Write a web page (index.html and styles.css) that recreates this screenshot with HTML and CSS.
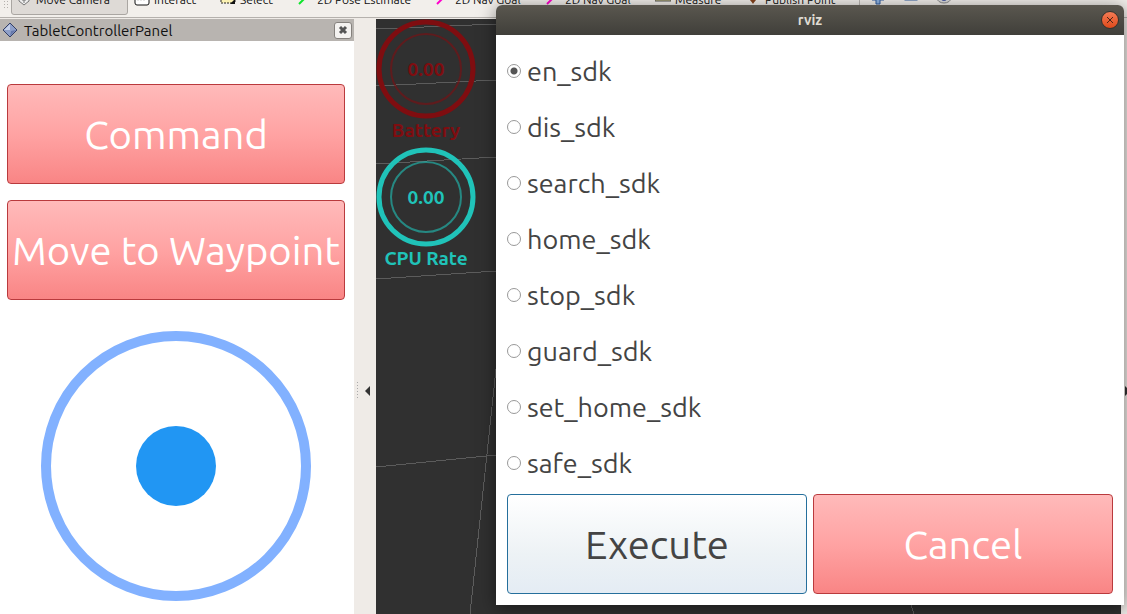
FILE: index.html
```
<!DOCTYPE html>
<html lang="en">
<head>
    <meta charset="UTF-8">
    <title>rviz</title>
    <link rel="stylesheet" href="styles.css">
</head>
<body>
<div id="container">
    <div class="toolbar">
        <div class="handle"></div>
        <button class="tool selected">
            <svg class="icon" viewBox="0 0 16 16"><path d="M5 2h6v5h2v3l-5 4-5-4V7h2z" fill="#eee" stroke="#777"/><path d="M6 9h4M8 6v6" stroke="#777"/></svg>
            Move Camera
        </button>
        <button class="tool">
            <svg class="icon" viewBox="0 0 16 16"><rect x="1" y="0" width="14" height="14" rx="2" fill="#fff" stroke="#111"/><path d="M4 8v2M7 8v2M10 8v2" stroke="#ccc"/></svg>
            Interact
        </button>
        <button class="tool">
            <svg class="icon" viewBox="0 0 16 16"><rect x="1" y="2" width="14" height="10" fill="#fbf1b2" stroke="#222" stroke-dasharray="2 1"/><path d="M15 8v5h-5z" fill="#111"/></svg>
            Select
        </button>
        <button class="tool">
            <svg class="icon" viewBox="0 0 16 16"><path d="M2 13L13 2" stroke="#0de52b" stroke-width="2"/></svg>
            2D Pose Estimate
        </button>
        <button class="tool">
            <svg class="icon" viewBox="0 0 16 16"><path d="M2 13L13 2" stroke="#f0c" stroke-width="2"/></svg>
            2D Nav Goal
        </button>
        <button class="tool">
            <svg class="icon" viewBox="0 0 16 16"><path d="M2 13L13 2" stroke="#f0c" stroke-width="2"/></svg>
            2D Nav Goal
        </button>
        <button class="tool">
            <svg class="icon" viewBox="0 0 16 16"><rect x="0" y="4" width="16" height="6" fill="#d6d08c" stroke="#555"/></svg>
            Measure
        </button>
        <button class="tool">
            <svg class="icon" viewBox="0 0 16 16"><path d="M4 6a4 4 0 0 1 8 0c0 3-3 5-4 7-1-2-4-4-4-7z" fill="#85431d"/></svg>
            Publish Point
        </button>
        <div class="extra">
            <button class="tool" aria-label="Add"><svg class="icon" viewBox="0 0 16 16"><path d="M6 1h4v5h4v3h-4v4h-4v-4h-4v-3h4z" fill="#8fb4e3" stroke="#2f5ca0"/></svg></button>
            <button class="tool" aria-label="Remove"><svg class="icon" viewBox="0 0 16 16"><rect x="2" y="6" width="12" height="3" fill="#8fb4e3" stroke="#2f5ca0"/></svg></button>
            <button class="tool" aria-label="View"><svg class="icon" viewBox="0 0 16 16"><ellipse cx="8" cy="7" rx="7" ry="5" fill="#ddd" stroke="#888"/><circle cx="8" cy="7" r="3" fill="#4858a0"/></svg></button>
        </div>
    </div>

    <div class="main">
        <div class="panel">
            <div class="panel-title">
                <svg class="icon" viewBox="0 0 16 16"><path d="M8 1l7 7-7 7-7-7z" fill="#8e9fc8" stroke="#333f66"/><path d="M8 2v6l-6 0z" fill="#c4cfe8"/><path d="M8 14l6-6-5 1z" fill="#6578ab"/></svg>
                <span>TabletControllerPanel</span>
                <button class="panel-close" aria-label="Close panel">
                    <svg viewBox="0 0 10 10"><path d="M2 2l6 6M8 2l-6 6" stroke="#555" stroke-width="3"/></svg>
                </button>
            </div>
            <div class="panel-body">
                <button class="btn red">Command</button>
                <button class="btn red">Move to Waypoint</button>
                <div class="joystick"><div class="stick"></div></div>
            </div>
        </div>

        <div class="splitter">
            <div class="dots"></div>
            <div class="arrow"></div>
        </div>

        <div class="view">
            <svg class="grid" width="745" height="595" viewBox="0 0 745 595">
                <path d="M0 10L120 5M0 67L120 61M0 145L120 138M0 260L120 252M0 448L110 437L120 436M120 350L94 595M535 586L538 595"/>
            </svg>
            <div class="gauge battery">
                <svg viewBox="0 0 100 100">
                    <circle cx="50" cy="50" r="47" stroke-width="5"/>
                    <circle class="inner" cx="50" cy="50" r="35" stroke-width="2"/>
                    <text x="50" y="57">0.00</text>
                </svg>
                <span>Battery</span>
            </div>
            <div class="gauge cpu">
                <svg viewBox="0 0 100 100">
                    <circle cx="50" cy="50" r="47" stroke-width="5"/>
                    <circle class="inner" cx="50" cy="50" r="35" stroke-width="2"/>
                    <text x="50" y="57">0.00</text>
                </svg>
                <span>CPU Rate</span>
            </div>
        </div>

        <div class="edge"><div class="arrow right"></div></div>
    </div>

    <form class="dialog">
        <div class="dialog-title">
            <span>rviz</span>
            <button type="button" class="dialog-close" aria-label="Close">
                <svg viewBox="0 0 16 16"><path d="M5 5l6 6M11 5l-6 6" stroke="#4a2415"/></svg>
            </button>
        </div>
        <div class="dialog-body">
            <label class="option"><input type="radio" name="cmd" checked>en_sdk</label>
            <label class="option"><input type="radio" name="cmd">dis_sdk</label>
            <label class="option"><input type="radio" name="cmd">search_sdk</label>
            <label class="option"><input type="radio" name="cmd">home_sdk</label>
            <label class="option"><input type="radio" name="cmd">stop_sdk</label>
            <label class="option"><input type="radio" name="cmd">guard_sdk</label>
            <label class="option"><input type="radio" name="cmd">set_home_sdk</label>
            <label class="option"><input type="radio" name="cmd">safe_sdk</label>
            <div class="actions">
                <button type="button" class="btn light">Execute</button>
                <button type="button" class="btn red">Cancel</button>
            </div>
        </div>
    </form>
</div>
</body>
</html>
```
FILE: styles.css
```
* {
    margin: 0;
    padding: 0;
    box-sizing: border-box;
}

body {
    font-family: Ubuntu, "Noto Sans", sans-serif;
    color: #111;
    background: #efebe7;
}

button {
    font-family: inherit;
    color: inherit;
    border: none;
    background: none;
}

#container {
    position: relative;
    display: flex;
    flex-direction: column;
    height: 100vh;
    overflow: hidden;
}

/* toolbar, its upper half is scrolled out of the window */
.toolbar {
    display: grid;
    grid-template-columns: 11px 119px 86px 77px 138px 110px 110px 90px 118px 1fr;
    grid-template-rows: 100%;
    align-items: end;
    flex: none;
    height: 18px;
    padding-bottom: 2px;
    overflow: hidden;
    background: #f2efeb;
    border-bottom: 1px solid #b5b1ad;
}

.handle {
    width: 5px;
    height: 8px;
    margin: 0 0 7px 3px;
    background: radial-gradient(#b5b1ad 1px, transparent 1px) 0 0 / 3px 3px;
}

.tool {
    display: flex;
    align-items: center;
    gap: 4px;
    height: 32px;
    padding: 0 4px;
    font-size: 12px;
    white-space: nowrap;
}

.tool.selected {
    margin-right: 2px;
    background: #dedad6;
    border: 1px solid #aaa6a2;
    border-radius: 3px;
}

.icon {
    width: 16px;
    height: 16px;
    flex: none;
}

.extra {
    display: flex;
    gap: 9px;
    padding-left: 6px;
    border-left: 1px solid #bbb7b3;
}

.main {
    display: grid;
    grid-template-columns: 354px 22px 1fr 6px;
    flex: 1;
    padding-top: 1px;
    min-height: 0;
}

/* left panel */
.panel {
    background: #fff;
}

.panel-title {
    display: flex;
    align-items: center;
    gap: 6px;
    height: 22px;
    padding: 0 2px;
    font-size: 15px;
    background: #b8b4b0;
}

.panel-close {
    width: 18px;
    height: 17px;
    margin-left: auto;
    background: #f4f2f0;
    border: 1px solid #85817d;
    border-radius: 3px;
}

.panel-close svg {
    display: block;
    width: 10px;
    height: 10px;
    margin: auto;
}

.panel-body {
    display: flex;
    flex-direction: column;
    gap: 16px;
    padding: 43px 9px 0 7px;
}

.btn {
    height: 100px;
    font-size: 40px;
    white-space: nowrap;
    border-radius: 4px;
}

.red {
    color: #fff;
    background: linear-gradient(#ffbaba, #ffa3a3 50%, #f98585);
    border: 1px solid #b93a3d;
}

.light {
    color: #444;
    background: linear-gradient(#fff, #edf2f5 60%, #e4ecf4);
    border: 1px solid #256f9c;
}

.joystick {
    display: flex;
    align-items: center;
    justify-content: center;
    align-self: center;
    width: 270px;
    height: 270px;
    margin-top: 15px;
    border: 10px solid #82b1ff;
    border-radius: 50%;
}

.stick {
    width: 80px;
    height: 80px;
    background: #2196f3;
    border-radius: 50%;
}

.splitter {
    display: flex;
    align-items: center;
    gap: 7px;
    padding: 148px 0 0 3px;
}

.dots {
    width: 1px;
    height: 17px;
    background: repeating-linear-gradient(#aaa 0 1px, transparent 1px 3px);
}

.arrow {
    border: 5px solid transparent;
    border-left: none;
    border-right-color: #333;
}

.arrow.right {
    border-left: 5px solid #333;
    border-right: none;
}

/* 3d view */
.view {
    position: relative;
    overflow: hidden;
    background: #303030;
}

.grid {
    position: absolute;
    top: 0;
    left: 0;
    fill: none;
    stroke: #5c5c5c;
    shape-rendering: crispEdges;
}

.gauge {
    position: relative;
    display: flex;
    flex-direction: column;
    align-items: center;
    width: 100px;
    height: 128px;
    font-size: 19px;
    font-weight: bold;
    line-height: 22px;
}

.gauge svg {
    width: 100px;
    height: 100px;
}

.gauge circle {
    fill: none;
    stroke: currentColor;
}

.gauge .inner {
    opacity: .6;
}

.gauge text {
    fill: currentColor;
    text-anchor: middle;
}

.battery {
    color: #7f0d10;
}

.cpu {
    color: #20c3b9;
}

.edge {
    display: flex;
    align-items: center;
    padding: 148px 0 0 4px;
}

/* dialog window */
.dialog {
    position: absolute;
    top: 5px;
    left: 496px;
    right: 3px;
    background: #fff;
    border-radius: 6px 6px 0 0;
    box-shadow: 0 3px 18px rgba(0, 0, 0, .5);
}

.dialog-title {
    display: grid;
    grid-template-columns: 1fr auto 1fr;
    align-items: center;
    height: 30px;
    padding: 0 5px;
    color: #dfdbd2;
    font-size: 14px;
    font-weight: bold;
    background: linear-gradient(#5a574f, #403f3a);
    border-radius: 6px 6px 0 0;
}

.dialog-title span {
    grid-column: 2;
}

.dialog-close {
    justify-self: end;
    width: 18px;
    height: 18px;
    background: linear-gradient(#f47b55, #df4a1b);
    border: 1px solid #35322c;
    border-radius: 50%;
}

.dialog-close svg {
    display: block;
}

.dialog-body {
    padding: 8px 11px 11px;
}

.option {
    display: flex;
    align-items: center;
    gap: 6px;
    height: 56px;
    color: #444;
    font-size: 27px;
}

.option input {
    appearance: none;
    width: 14px;
    height: 14px;
    border: 1px solid #999;
    border-radius: 50%;
}

.option input:checked {
    background: radial-gradient(#555 3px, #fff 4px);
}

.actions {
    display: grid;
    grid-template-columns: 1fr 1fr;
    gap: 6px;
    padding-top: 3px;
}
```
